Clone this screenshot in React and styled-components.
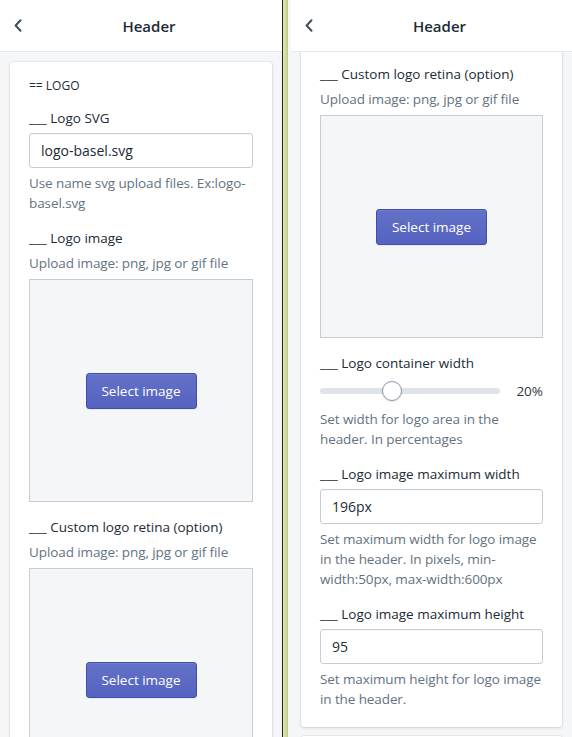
import { useLayoutEffect, useRef } from "react";
import styled, { createGlobalStyle } from "styled-components";

const GlobalStyle = createGlobalStyle`
  html, body {
    margin: 0;
    padding: 0;
    height: 100%;
    overflow: hidden;
  }
  body {
    font-family: "Open Sans", "Noto Sans", sans-serif;
    color: #212b36;
    background: #f4f6f8;
  }
  * {
    box-sizing: border-box;
  }
`;

const fields = [
  { kind: "text", label: "Logo SVG", value: "logo-basel.svg", help: "Use name svg upload files. Ex:logo-basel.svg" },
  { kind: "image", label: "Logo image", help: "Upload image: png, jpg or gif file" },
  { kind: "image", label: "Custom logo retina (option)", help: "Upload image: png, jpg or gif file" },
  { kind: "range", label: "Logo container width", value: 20, min: 0, max: 52, help: "Set width for logo area in the header. In percentages" },
  { kind: "text", label: "Logo image maximum width", value: "196px", help: "Set maximum width for logo image in the header. In pixels, min-width:50px, max-width:600px" },
  { kind: "text", label: "Logo image maximum height", value: "95", help: "Set maximum height for logo image in the header." },
];

export default function App() {
  return (
    <>
      <GlobalStyle />
      <Screen>
        <SettingsPanel width={282} />
        <Divider />
        <SettingsPanel width={284} inset={3} scroll={453} />
      </Screen>
    </>
  );
}

function SettingsPanel({ width, inset = 0, scroll = 0 }) {
  const bodyRef = useRef(null);
  useLayoutEffect(() => {
    if (bodyRef.current) bodyRef.current.scrollTop = scroll;
  }, [scroll]);

  return (
    <Panel $width={width} $inset={inset}>
      <TopBar>
        <BackButton aria-label="Back">
          <svg width="8" height="13" viewBox="0 0 8 13" fill="none">
            <path d="M6.5 1.2 1.6 6.5l4.9 5.3" stroke="#454f5b" strokeWidth="2" strokeLinecap="round" strokeLinejoin="round" />
          </svg>
        </BackButton>
        <Title>Header</Title>
      </TopBar>
      <Body ref={bodyRef}>
        <Card>
          <SectionTitle>== LOGO</SectionTitle>
          {fields.map((f) => (
            <Field key={f.label} $gap={f.kind === "range" ? 8 : 5}>
              <Label>___ {f.label}</Label>
              {f.kind === "image" && <Help>{f.help}</Help>}
              {f.kind === "text" && <TextInput defaultValue={f.value} />}
              {f.kind === "image" && (
                <Dropzone>
                  <PrimaryButton>Select image</PrimaryButton>
                </Dropzone>
              )}
              {f.kind === "range" && (
                <SliderRow>
                  <Track>
                    <Thumb style={{ left: `calc((100% - 20px) * ${(f.value - f.min) / (f.max - f.min)})` }} />
                  </Track>
                  <SliderValue>{f.value}%</SliderValue>
                </SliderRow>
              )}
              {f.kind !== "image" && <Help>{f.help}</Help>}
            </Field>
          ))}
        </Card>
        <Card>
          <SectionTitle>== STICKY HEADER</SectionTitle>
          <Field $gap={5}>
            <Label>___ Sticky header</Label>
            <Help>Enable sticky header on scroll</Help>
          </Field>
        </Card>
      </Body>
    </Panel>
  );
}

const Screen = styled.div`
  display: flex;
  height: 100vh;
  width: 572px;
  overflow: hidden;
`;

const Divider = styled.div`
  flex: 0 0 6px;
  border-left: 1px solid #1e2416;
  background: linear-gradient(to right, #e1e9b6, #cfd99a 60%, #bcc67f);
`;

const Panel = styled.section`
  flex: 0 0 ${(p) => p.$width}px;
  display: flex;
  flex-direction: column;
  height: 100%;
  padding-left: ${(p) => p.$inset}px;
  background: #f4f6f8;
`;

const TopBar = styled.header`
  flex: 0 0 52px;
  display: grid;
  grid-template-columns: 40px 1fr 24px;
  align-items: center;
  background: #ffffff;
  border-bottom: 1px solid #e6e9ec;
`;

const BackButton = styled.button`
  display: flex;
  align-items: center;
  height: 100%;
  padding: 0 0 0 14px;
  border: none;
  background: none;
  cursor: pointer;
`;

const Title = styled.h2`
  margin: 0;
  text-align: center;
  font-size: 15px;
  font-weight: 600;
  color: #212b36;
`;

const Body = styled.div`
  flex: 1;
  overflow: hidden;
  padding: 10px;
  display: flex;
  flex-direction: column;
  gap: 9px;
`;

const Card = styled.div`
  flex: 0 0 auto;
  background: #ffffff;
  border-radius: 3px;
  box-shadow: 0 0 0 1px rgba(63, 63, 68, 0.06), 0 1px 3px 0 rgba(63, 63, 68, 0.15);
  padding: 14px 19px 18px 19px;
  display: flex;
  flex-direction: column;
  gap: 15px;
`;

const SectionTitle = styled.div`
  font-size: 12px;
  line-height: 20px;
  text-transform: uppercase;
  color: #212b36;
  margin-bottom: -3px;
`;

const Field = styled.div`
  display: flex;
  flex-direction: column;
  gap: ${(p) => p.$gap}px;
`;

const Label = styled.label`
  font-size: 13.5px;
  line-height: 20px;
  color: #212b36;
`;

const Help = styled.p`
  margin: 0;
  font-size: 13.5px;
  line-height: 20px;
  letter-spacing: -0.1px;
  color: #637381;
`;

const TextInput = styled.input`
  width: 100%;
  height: 35px;
  padding: 0 11px;
  font-family: inherit;
  font-size: 14px;
  color: #212b36;
  background: #ffffff;
  border: 1px solid #c4cdd5;
  border-radius: 3px;
  box-shadow: inset 0 1px 0 0 rgba(99, 115, 129, 0.05);
  outline: none;
`;

const Dropzone = styled.div`
  height: 223px;
  display: flex;
  align-items: center;
  justify-content: center;
  background: #f4f6f8;
  border: 1px solid #c4cdd5;
  margin-top: 1px;
`;

const PrimaryButton = styled.button`
  width: 111px;
  height: 36px;
  font-family: inherit;
  font-size: 13.5px;
  color: #ffffff;
  background: linear-gradient(180deg, #6371c7, #5563c1);
  border: 1px solid #3f4eae;
  border-radius: 3px;
  box-shadow: inset 0 1px 0 0 #6f7bcb, 0 1px 0 0 rgba(22, 29, 37, 0.05);
  cursor: pointer;
`;

const SliderRow = styled.div`
  display: flex;
  align-items: center;
  justify-content: space-between;
  height: 20px;
`;

const Track = styled.div`
  position: relative;
  width: 180px;
  height: 6px;
  border-radius: 3px;
  background: #dfe3e8;
`;

const Thumb = styled.span`
  position: absolute;
  top: -7px;
  width: 20px;
  height: 20px;
  border-radius: 50%;
  background: #ffffff;
  border: 1px solid #8797ab;
  box-shadow: 0 1px 2px rgba(22, 29, 37, 0.1);
`;

const SliderValue = styled.span`
  font-size: 13.5px;
  line-height: 20px;
  color: #31373d;
`;
